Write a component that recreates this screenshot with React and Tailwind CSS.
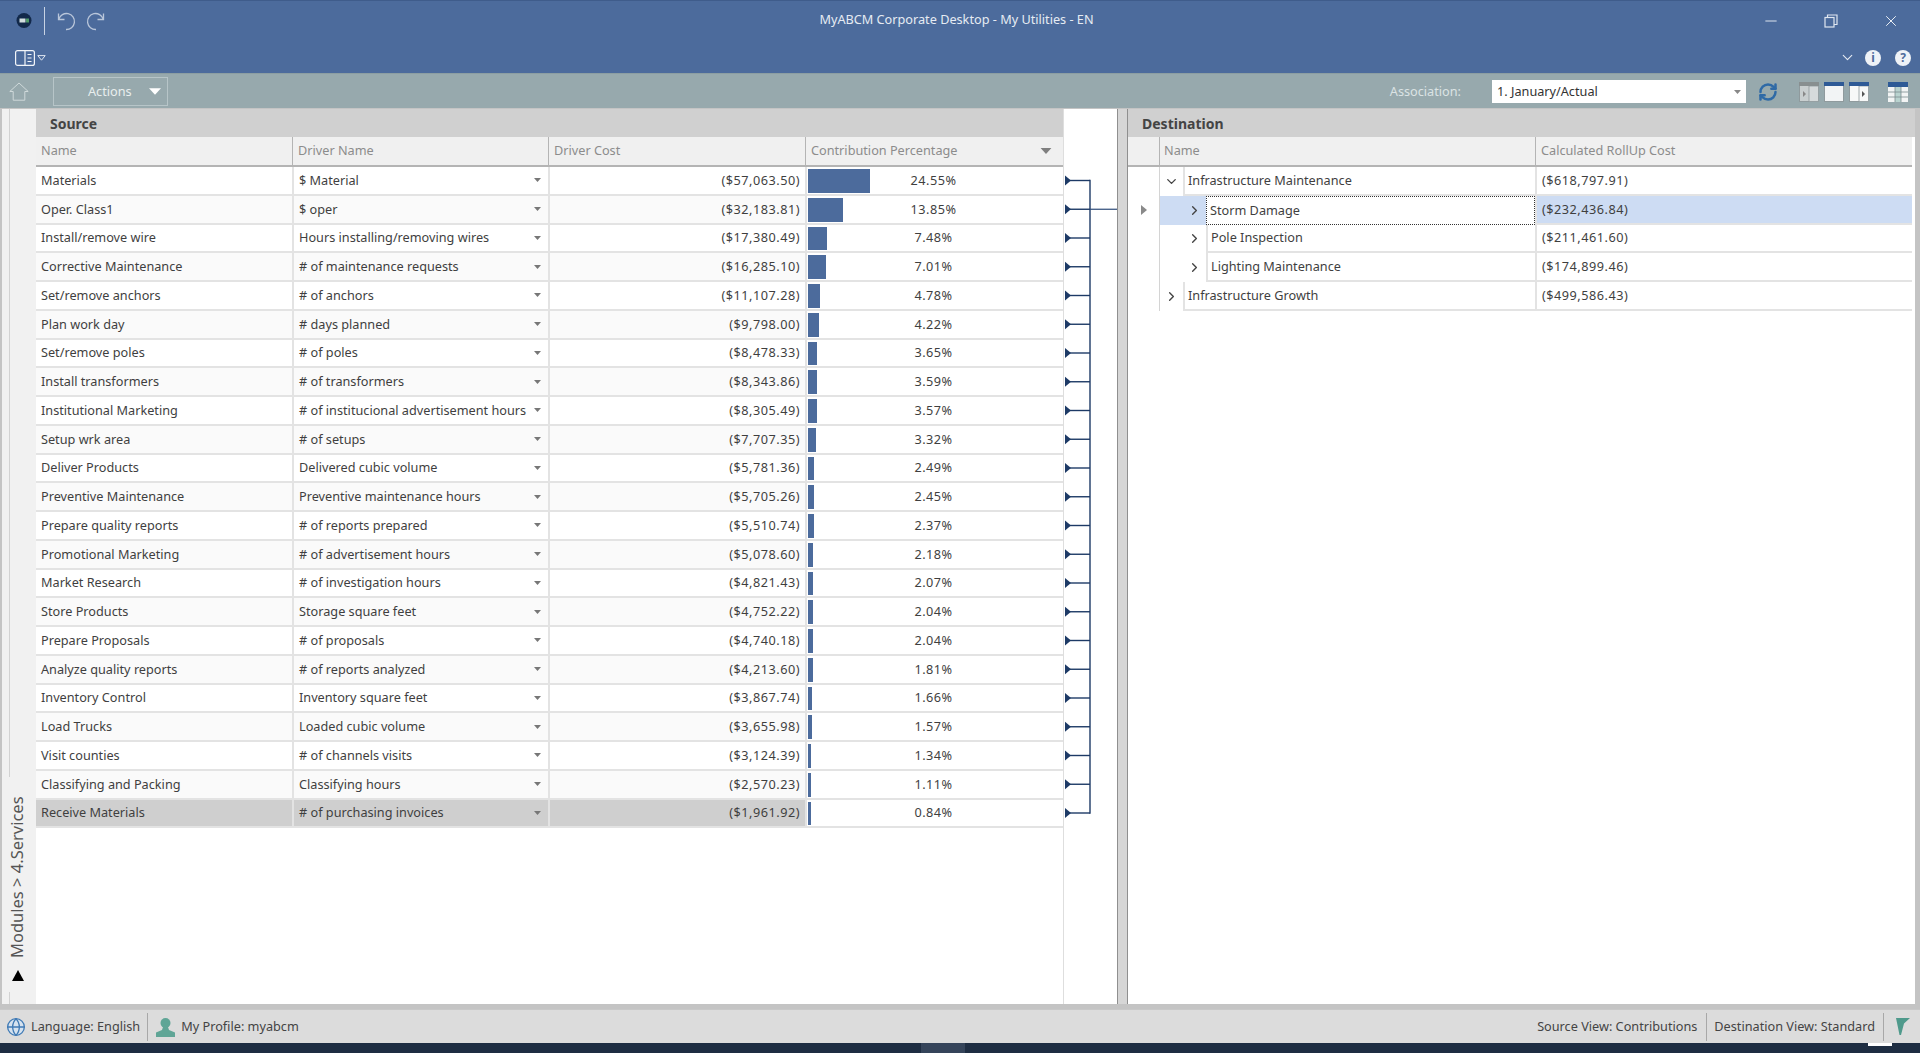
import React from 'react';
import { Minus, X, ChevronDown, ChevronRight, RefreshCw, Globe } from 'lucide-react';

const sourceRows = [
  ['Materials', '$ Material', '($57,063.50)', 24.55],
  ['Oper. Class1', '$ oper', '($32,183.81)', 13.85],
  ['Install/remove wire', 'Hours installing/removing wires', '($17,380.49)', 7.48],
  ['Corrective Maintenance', '# of maintenance requests', '($16,285.10)', 7.01],
  ['Set/remove anchors', '# of anchors', '($11,107.28)', 4.78],
  ['Plan work day', '# days planned', '($9,798.00)', 4.22],
  ['Set/remove poles', '# of poles', '($8,478.33)', 3.65],
  ['Install transformers', '# of transformers', '($8,343.86)', 3.59],
  ['Institutional Marketing', '# of institucional advertisement hours', '($8,305.49)', 3.57],
  ['Setup wrk area', '# of setups', '($7,707.35)', 3.32],
  ['Deliver Products', 'Delivered cubic volume', '($5,781.36)', 2.49],
  ['Preventive Maintenance', 'Preventive maintenance hours', '($5,705.26)', 2.45],
  ['Prepare quality reports', '# of reports prepared', '($5,510.74)', 2.37],
  ['Promotional Marketing', '# of advertisement hours', '($5,078.60)', 2.18],
  ['Market Research', '# of investigation hours', '($4,821.43)', 2.07],
  ['Store Products', 'Storage square feet', '($4,752.22)', 2.04],
  ['Prepare Proposals', '# of proposals', '($4,740.18)', 2.04],
  ['Analyze quality reports', '# of reports analyzed', '($4,213.60)', 1.81],
  ['Inventory Control', 'Inventory square feet', '($3,867.74)', 1.66],
  ['Load Trucks', 'Loaded cubic volume', '($3,655.98)', 1.57],
  ['Visit counties', '# of channels visits', '($3,124.39)', 1.34],
  ['Classifying and Packing', 'Classifying hours', '($2,570.23)', 1.11],
  ['Receive Materials', '# of purchasing invoices', '($1,961.92)', 0.84],
];

const destRows = [
  { name: 'Infrastructure Maintenance', cost: '($618,797.91)', level: 0, open: true },
  { name: 'Storm Damage', cost: '($232,436.84)', level: 1, selected: true },
  { name: 'Pole Inspection', cost: '($211,461.60)', level: 1 },
  { name: 'Lighting Maintenance', cost: '($174,899.46)', level: 1 },
  { name: 'Infrastructure Growth', cost: '($499,586.43)', level: 0 },
];

const ROW_H = 28.75;

// lines between the source rows and the selected destination row
const Connector = () => (
  <svg width="54" height="690" className="block" fill="none">
    {sourceRows.map((r, i) => {
      const y = 13.5 + i * ROW_H;
      return (
        <g key={i}>
          <path d={`M1 ${y - 5} L7 ${y} L1 ${y + 5} Z`} fill="#1d3a66" />
          <line x1="4" y1={y} x2="26" y2={y} stroke="#1d3a66" strokeWidth="1.4" />
        </g>
      );
    })}
    <line x1="26" y1="12.8" x2="26" y2={14.2 + 22 * ROW_H} stroke="#1d3a66" strokeWidth="1.4" />
    <line x1="26" y1={13.5 + ROW_H} x2="54" y2={13.5 + ROW_H} stroke="#2c4a78" strokeWidth="1.2" />
  </svg>
);

const Caret = ({ className }) => (
  <svg width="9" height="5" viewBox="0 0 9 5" className={className}>
    <path d="M0 0h9L4.5 5z" fill="currentColor" />
  </svg>
);

const UndoIcon = ({ className }) => (
  <svg width="20" height="20" viewBox="0 0 20 20" fill="none" stroke="#b9c6da" strokeWidth="1.3" className={className}>
    <path d="M2.5 2.5v6h6" />
    <path d="M2.8 8.2A8 8 0 1 1 10 18.5" />
  </svg>
);

const LayoutIcon = ({ top, left, right, arrow }) => (
  <svg width="20" height="20" viewBox="0 0 20 20">
    <rect x="0.5" y="0.5" width="19" height="19" fill={left} stroke="#8f9a9d" />
    {right && <rect x="10" y="4" width="9.5" height="15.5" fill={right} stroke="#8f9a9d" strokeWidth="0.8" />}
    <rect x="0" y="0" width="20" height="4" fill={top} />
    {arrow}
  </svg>
);

const App = () => (
  <div className="w-[1920px] h-screen flex flex-col overflow-hidden bg-[#dcdcdc] text-[#3f3f3f] text-[12.7px] font-['Noto_Sans',Arial,sans-serif]">
    {/* Title bar */}
    <header className="h-[73px] shrink-0 bg-[#4c6b9c] text-white border-t border-[#3f5c8b] flex flex-col">
      <div className="h-[39px] flex items-center">
        <svg width="16" height="15" viewBox="0 0 16 15" className="ml-[16px]">
          <circle cx="8" cy="7.500" r="7.500" fill="#12294a" />
          <rect x="3.500" y="5.500" width="6" height="4" fill="#d3dfdf" />
          <rect x="10" y="5.500" width="3" height="4" fill="#4f9a6a" />
        </svg>
        <div className="ml-[12px] w-px h-[28px] bg-[#c8d3e4]" />
        <UndoIcon className="ml-[11px]" />
        <UndoIcon className="ml-[10px] -scale-x-100" />
        <div className="flex-1 text-center text-[#e6ebf3] pl-[45px] -mt-[1px] whitespace-nowrap">MyABCM Corporate Desktop - My Utilities - EN</div>
        <div className="flex items-center mr-[20px] gap-[44px]">
          <Minus size={18} strokeWidth={1.3} className="text-[#dfe6f0]" />
          <svg width="14" height="14" viewBox="0 0 14 14" fill="none" stroke="#dfe6f0" strokeWidth="1.2">
            <rect x="1" y="3.5" width="9" height="9.5" />
            <path d="M3.5 3.5V1H13v9.5h-3" />
          </svg>
          <X size={18} strokeWidth={1.3} className="text-[#eef2f7]" />
        </div>
      </div>
      <div className="flex-1 flex items-center pt-[2px]">
        <svg width="20" height="16" viewBox="0 0 20 16" fill="none" stroke="#f2f5f9" strokeWidth="1.2" className="ml-[15px]">
          <rect x="0.6" y="0.6" width="18.8" height="14.8" rx="2" />
          <path d="M10 1v14M12.5 4.5h4M12.5 8h4M12.5 11.5h4" />
        </svg>
        <svg width="9" height="6" viewBox="0 0 9 6" fill="none" stroke="#dfe6f0" className="ml-[2px]">
          <path d="M.8.6h7.4L4.5 5.2z" />
        </svg>
        <div className="ml-auto mr-[9px] flex items-center">
          <ChevronDown size={17} strokeWidth={1.6} className="text-[#e6ebf3]" />
          <div className="ml-[9px] w-[16px] h-[16px] rounded-full bg-[#eef2f7] text-[#4c6b9c] font-bold text-[12px] leading-none flex items-center justify-center">i</div>
          <div className="ml-[14px] w-[16px] h-[16px] rounded-full bg-[#eef2f7] text-[#4c6b9c] font-bold text-[12px] leading-none flex items-center justify-center">?</div>
        </div>
      </div>
    </header>

    {/* Toolbar */}
    <div className="h-[35px] shrink-0 bg-[#97a9ad] flex items-center border-t border-[#8c9ea2] pt-px">
      <svg width="20" height="19" viewBox="0 0 20 19" fill="none" stroke="#cfd9da" strokeWidth="1" className="ml-[9px]">
        <path d="M.8 9.5 10 1l9.2 8.5h-3.4v8.7H4.2V9.5z" />
      </svg>
      <div className="ml-[24px] w-[115px] h-[29px] border border-[#b7c5c8] flex items-center text-[#e8eeee]">
        <span className="ml-[34px]">Actions</span>
        <Caret className="ml-auto mr-[6px] w-[12px] h-[7px] text-white" />
      </div>
      <span className="ml-auto text-[#dbe3e4]">Association:</span>
      <div className="ml-[31px] w-[254px] h-[23px] bg-white flex items-center pl-[5px] text-[#333]">
        1. January/Actual
        <Caret className="ml-auto mr-[5px] w-[7px] h-[4px] text-[#888]" />
      </div>
      <RefreshCw size={20} strokeWidth={3} className="ml-[12px] text-[#2f6aa6]" />
      <div className="ml-[21px] flex gap-[5px]">
        <LayoutIcon top="#888f90" left="#c9cfd0" right="#d6dadb" arrow={<path d="M4 9l3 3-3 3z" fill="#888" />} />
        <LayoutIcon top="#2e5a96" left="#f2f4f5" />
        <LayoutIcon top="#2e5a96" left="#f7f8f8" right="#f7f8f8" arrow={<path d="M13 9l3 3-3 3z" fill="#555" />} />
      </div>
      <svg width="20" height="20" viewBox="0 0 20 20" className="ml-[19px] mr-[12px]">
        <rect width="20" height="20" fill="#f2f4f4" />
        <rect width="20" height="5" fill="#2e5a96" />
        <rect x="7" y="5" width="6" height="15" fill="#b9d3cf" />
        <path d="M0 10h20M0 15h20M7 5v15M13 5v15" stroke="#7b8d90" strokeWidth="0.8" />
      </svg>
    </div>

    {/* Main area */}
    <main className="h-[901px] shrink-0 flex bg-[#c4c4c4] pl-[2px] pr-[5px] pt-px pb-[5px]">
      {/* Collapsed side group */}
      <aside className="w-[34px] shrink-0 bg-[#f1f1f1] flex flex-col items-center">
        <div className="w-px h-[668px] bg-[#d2d2d2] -ml-[19px]" />
        <span className="mt-[19px] h-[162px] [writing-mode:vertical-rl] rotate-180 text-[#555] text-[16.5px] -ml-[3px] leading-none whitespace-nowrap">Modules &gt; 4.Services</span>
        <div className="mt-[12px] -ml-[3px] w-0 h-0 border-l-[6px] border-r-[6px] border-b-[11px] border-l-transparent border-r-transparent border-b-black" />
        <div className="w-px h-[12px] mt-[11px] bg-[#d2d2d2] -ml-[19px]" />
      </aside>

      {/* Source panel */}
      <section className="w-[1028px] shrink-0 bg-white flex flex-col border-r border-[#dedede]">
        <div className="h-[28px] shrink-0 bg-[#d0d0d0] pl-[14px] flex items-center font-bold text-[14px] text-[#444]">Source</div>
        <div className="h-[30px] shrink-0 bg-[#f0f0f0] border-b-2 border-[#b4b4b4] grid grid-cols-[256px_256px_257px_258px] text-[#8c8c8c]">
          <div className="pl-[5px] flex items-center">Name</div>
          <div className="pl-[5px] flex items-center border-l border-[#b4b4b4]">Driver Name</div>
          <div className="pl-[5px] flex items-center border-l border-[#b4b4b4]">Driver Cost</div>
          <div className="pl-[5px] pr-[11px] flex items-center justify-between border-l border-[#b4b4b4]">
            Contribution Percentage
            <Caret className="w-[12px] h-[6px] text-[#7f7f7f]" />
          </div>
        </div>
        {sourceRows.map((r, i) => {
          const last = i === sourceRows.length - 1;
          const stripe = i % 2 === 1 ? 'bg-[#fafafa]' : 'bg-white';
          return (
            <div key={r[0]} className={`h-[28.75px] shrink-0 grid grid-cols-[256px_256px_257px_258px] border-b-2 border-[#e3e3e3] ${last ? 'bg-[#cfcfcf]' : stripe}`}>
              <div className="pl-[5px] flex items-center whitespace-nowrap">{r[0]}</div>
              <div className="pl-[5px] pr-[7px] flex items-center whitespace-nowrap border-l-2 border-[#e3e3e3]">
                <span>{r[1]}</span>
                <Caret className="ml-auto shrink-0 w-[7px] h-[4px] text-[#777]" />
              </div>
              <div className="pr-[5px] flex items-center justify-end tracking-[0.5px] border-l-2 border-[#e3e3e3]">{r[2]}</div>
              <div className="relative flex items-center justify-center tracking-[0.5px] border-l-2 border-[#e3e3e3] bg-white pr-[3px]">
                <div className="absolute left-[1px] top-[2px] bottom-[1px] bg-[#4c6b9c]" style={{ width: Math.max(3, Math.round(r[3] * 2.52)) }} />
                <span className="relative">{r[3].toFixed(2)}%</span>
              </div>
            </div>
          );
        })}
      </section>

      {/* Connector lines */}
      <div className="w-[53px] shrink-0 bg-white pt-[58px]">
        <Connector />
      </div>

      {/* Splitter */}
      <div className="w-[11px] shrink-0 bg-[#d6d6d6] border-x border-[#8f8f8f]" />

      {/* Destination panel */}
      <section className="flex-1 bg-white flex flex-col">
        <div className="h-[28px] shrink-0 bg-[#d0d0d0] pl-[14px] flex items-center font-bold text-[14px] text-[#444]">Destination</div>
        <div className="h-[30px] shrink-0 bg-[#f0f0f0] border-b-2 border-[#b4b4b4] grid grid-cols-[31px_376px_1fr] text-[#8c8c8c] mr-[3px]">
          <div />
          <div className="pl-[4px] flex items-center border-l border-[#b4b4b4]">Name</div>
          <div className="pl-[5px] flex items-center border-l border-[#b4b4b4]">Calculated RollUp Cost</div>
        </div>
        {destRows.map((r) => (
          <div key={r.name} className="h-[28.75px] shrink-0 grid grid-cols-[31px_376px_1fr] mr-[3px]">
            <div className="flex items-center justify-center bg-white">
              {r.selected && (
                <svg width="6" height="10" viewBox="0 0 6 10">
                  <path d="M0 0l6 5-6 5z" fill="#8a8a8a" />
                </svg>
              )}
            </div>
            <div className={`flex border-l border-[#d4d4d4] ${r.selected ? 'bg-[#cddcf3]' : ''}`}>
              <div className={`${r.level === 0 ? 'w-[23px]' : 'w-[46px]'} shrink-0 flex items-center justify-end pr-[4px]`}>
                {r.open
                  ? <ChevronDown size={15} strokeWidth={2.2} className="text-[#444]" />
                  : <ChevronRight size={15} strokeWidth={2.2} className="text-[#444]" />}
              </div>
              <div className={`flex-1 pl-[3px] flex items-center bg-white ${r.selected ? 'border border-dotted border-[#333]' : 'border-b-2 border-l-2 border-[#e3e3e3]'}`}>
                {r.name}
              </div>
            </div>
            <div className={`pl-[5px] flex items-center tracking-[0.5px] border-b-2 border-l-2 border-[#e3e3e3] ${r.selected ? 'bg-[#cddcf3]' : 'bg-white'}`}>
              {r.cost}
            </div>
          </div>
        ))}
      </section>
    </main>

    {/* Status bar */}
    <footer className="h-[34px] shrink-0 bg-[#dcdcdc] flex items-center border-t border-[#c8c8c8] text-[#444]">
      <Globe size={20} strokeWidth={1.6} className="ml-[6px] text-[#3f7ab5] fill-[#d5e2ef]" />
      <span className="ml-[5px] pr-[7px] h-[28px] flex items-center border-r border-[#a8a8a8]">Language: English</span>
      <svg width="21" height="20" viewBox="0 0 21 20" className="ml-[7px]">
        <circle cx="10.5" cy="6" r="5" fill="#5fa596" />
        <path d="M8 10h5l1 3 6 2.5V20H1v-4.500L7 13z" fill="#5fa596" />
      </svg>
      <span className="ml-[5px]">My Profile: myabcm</span>
      <span className="ml-auto pr-[9px] h-[28px] flex items-center border-r border-[#a8a8a8]">Source View: Contributions</span>
      <span className="pl-[7px] pr-[8px] h-[28px] flex items-center border-r border-[#a8a8a8]">Destination View: Standard</span>
      <svg width="14" height="19" viewBox="0 0 14 19" className="ml-[12px] mr-[10px]">
        <path d="M0 1h14L8 6.500 5 18H3.500z" fill="#4f9a8c" />
      </svg>
    </footer>

    {/* Windows taskbar, cut off at the window edge */}
    <div className="flex-1 bg-[#1e2d42] flex">
      <div className="ml-[921px] w-[44px] bg-[#35445a]" />
      <div className="ml-[903px] w-[24px] h-[3px] bg-white" />
    </div>
  </div>
);

export default App;
